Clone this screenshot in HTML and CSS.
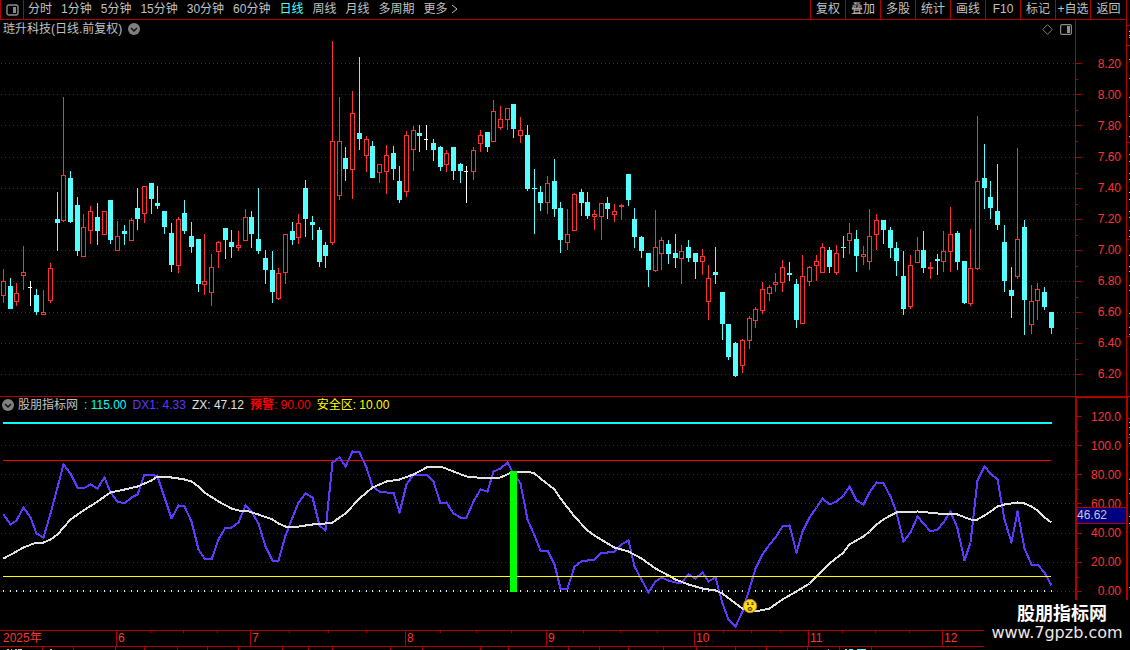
FILE: index.html
```html
<!DOCTYPE html>
<html lang="zh-CN">
<head>
<meta charset="utf-8">
<title>琏升科技 日线</title>
<link rel="stylesheet" href="styles.css">
</head>
<body>
<div class="app">
  <header class="toolbar">
    <button class="layout-toggle" aria-label="布局">
      <svg width="13" height="12" viewBox="0 0 13 12"><rect x="1" y="1" width="11" height="10" rx="2" fill="none" stroke="#8a8a8a" stroke-width="1.4"/><rect x="7" y="3" width="3" height="6" fill="#8a8a8a"/></svg>
    </button>
    <nav class="periods">
      <button>分时</button><button>1分钟</button><button>5分钟</button><button>15分钟</button><button>30分钟</button><button>60分钟</button><button class="active">日线</button><button>周线</button><button>月线</button><button>多周期</button><button class="more">更多<svg width="7" height="10" viewBox="0 0 7 10"><path d="M1 1l5 4-5 4" fill="none" stroke="#c0c0c0"/></svg></button>
    </nav>
    <div class="actions">
      <button>复权</button><button>叠加</button><button>多股</button><button>统计</button><button>画线</button><button>F10</button><button>标记</button><button>+自选</button><button>返回</button>
    </div>
  </header>

  <main class="board">
    <section class="panel price">
      <svg id="price" class="plot" viewBox="0 20 1075 376" preserveAspectRatio="none"></svg>
      <div class="caption">
        <h1>琏升科技(日线.前复权)</h1>
        <button class="round" aria-label="展开"><svg width="12" height="12" viewBox="0 0 12 12"><circle cx="6" cy="6" r="6" fill="#808080"/><path d="M3 5l3 3 3-3" fill="none" stroke="#111" stroke-width="1.5"/></svg></button>
        <div class="tools">
          <svg width="11" height="11" viewBox="0 0 11 11"><path d="M5.5 .7l4.8 4.8-4.8 4.8L.7 5.500z" fill="none" stroke="#808080"/></svg>
          <svg width="12" height="11" viewBox="0 0 12 11"><rect x=".6" y=".6" width="10.800" height="9.800" rx="1.500" fill="none" stroke="#8a8a8a" stroke-width="1.200"/><rect x="7" y="2" width="3" height="7" fill="#909090"/></svg>
        </div>
      </div>
    </section>
    <aside class="scale price-scale">
      <svg id="priceTicks" class="plot" viewBox="0 20 50 376" preserveAspectRatio="none"></svg>
      <div class="labels"><span>8.20</span><span>8.00</span><span>7.80</span><span>7.60</span><span>7.40</span><span>7.20</span><span>7.00</span><span>6.80</span><span>6.60</span><span>6.40</span><span>6.20</span></div>
    </aside>

    <section class="panel indicator">
      <svg id="indicator" class="plot" viewBox="0 397 1075 233" preserveAspectRatio="none"></svg>
      <div class="caption">
        <button class="round" aria-label="展开"><svg width="12" height="12" viewBox="0 0 12 12"><circle cx="6" cy="6" r="6" fill="#808080"/><path d="M3 5l3 3 3-3" fill="none" stroke="#111" stroke-width="1.5"/></svg></button>
        <h2>股朋指标网</h2>
        <span class="cyan">: 115.00</span><span class="violet">DX1: 4.33</span><span class="white">ZX: 47.12</span><span class="red"><b>预警</b>: 90.00</span><span class="yellow">安全区: 10.00</span>
      </div>
    </section>
    <aside class="scale indicator-scale">
      <svg id="indicatorTicks" class="plot" viewBox="0 398 49 232" preserveAspectRatio="none"></svg>
      <div class="labels"><span>120.0</span><span>100.0</span><span>80.00</span><span>60.00</span><span>40.00</span><span>20.00</span><span>0.00</span></div>
      <output class="cursor-value">46.62</output>
    </aside>

    <div class="edge"><svg id="edge" class="plot" viewBox="1127 20 3 610" preserveAspectRatio="none"></svg></div>
  </main>

  <footer class="timeline">
    <svg id="dateTicks" class="plot" viewBox="0 631 1130 19" preserveAspectRatio="none"></svg>
    <div class="months"><span>2025年</span><span>6</span><span>7</span><span>8</span><span>9</span><span>10</span><span>11</span><span>12</span></div>
  </footer>

  <div class="brand"><strong>股朋指标网</strong><span>www.7gpzb.com</span></div>
</div>
<script src="chart.js"></script>
</body>
</html>
```
FILE: styles.css
```css
* { box-sizing: border-box; }

body {
  margin: 0;
  background: #000;
  color: #c0c0c0;
  font: 12px/16px "Liberation Sans", "Noto Sans CJK SC", sans-serif;
}

button {
  margin: 0;
  padding: 0;
  border: 0;
  background: none;
  color: inherit;
  font: inherit;
  white-space: nowrap;
}

h1, h2 { margin: 0; font-size: 12px; font-weight: 400; }

svg { display: block; }

.app {
  position: relative;
  display: flex;
  flex-direction: column;
  height: 100vh;
  min-height: 400px;
  overflow: hidden;
}

.toolbar {
  display: flex;
  flex: none;
  height: 20px;
  margin-right: 3px;
  border: solid #b00000;
  border-width: 0 1px 1px 0;
}

.layout-toggle {
  display: flex;
  align-items: center;
  justify-content: center;
  width: 24px;
  border: solid #b00000;
  border-width: 0 1px;
}

.periods { display: flex; flex: 1; gap: 9px; padding-left: 4px; }
.periods button { height: 18px; }
.periods .active { color: #54ffff; }
.periods .more { display: flex; align-items: center; gap: 3px; }

.actions { display: grid; grid-template-columns: repeat(8, 35px) 36px; }
.actions button { height: 18px; border-left: 1px solid #b00000; }
.actions button { height: 19px; padding-bottom: 1px; }

.board {
  display: grid;
  flex: 1;
  grid-template-columns: 1fr 51px 4px;
  grid-template-rows: 376fr 234fr;
  min-height: 0;
}

.panel, .scale { display: grid; min-height: 0; min-width: 0; }
.panel > *, .scale > * { grid-area: 1 / 1; min-height: 0; min-width: 0; }

.plot { width: 100%; height: 100%; shape-rendering: crispEdges; }

.indicator { border-top: 1px solid #b00000; }

.caption { display: flex; align-items: center; align-self: start; z-index: 1; }
.price .caption { height: 18px; gap: 6px; padding: 0 3px; }
.indicator .caption { height: 16px; gap: 6px; padding-left: 2px; }
.indicator .caption h2 { margin-left: -2px; }
.tools { display: flex; gap: 7px; margin-left: auto; }

.cyan { color: #00ffff; }
.violet { color: #6038ff; }
.white { color: #e0e0e0; }
.red { color: #ff0000; }
.yellow { color: #ffff00; }

.scale { border-left: 1px solid #b00000; color: #ff3232; }
.labels { display: flex; flex-direction: column; padding-right: 5px; text-align: right; }
.labels span { display: flex; flex: 1; align-items: center; justify-content: flex-end; min-height: 0; }
.price-scale .labels { padding-top: 28px; padding-bottom: 6px; }
.indicator-scale { border-top: 2px solid #b00000; border-left-width: 2px; }
.indicator-scale .labels { padding-top: 4px; padding-bottom: 24px; }

.cursor-value {
  align-self: start;
  height: 17px;
  margin-top: 109px;
  border: solid #b00000;
  border-width: 1px 0;
  background: #000080;
  color: #c8c8c8;
  line-height: 14px;
}

.edge { grid-area: 1 / 3 / 3 / 4; border-left: 1px solid #b00000; }

.timeline { display: grid; flex: none; height: 20px; border-top: 1px solid #b00000; color: #ff3232; }
.timeline > * { grid-area: 1 / 1; min-height: 0; }
.months {
  display: grid;
  grid-template-columns: 116fr 134fr 155fr 141fr 148fr 114fr 134fr 184fr;
  align-self: start;
  height: 16px;
  margin-right: 4px;
  border-bottom: 1px solid #b00000;
}
.months span { padding-left: 1px; border-left: 1px solid #b00000; line-height: 15px; }
.months span:first-child { padding-left: 3px; border-left: 0; }

.brand {
  position: absolute;
  right: 0;
  bottom: 0;
  z-index: 2;
  display: flex;
  flex-direction: column;
  align-items: center;
  width: 146px;
  height: 50px;
  padding: 4px 0 0 10px;
  background: #000;
  color: #fff;
}
.brand strong { font-size: 18px; line-height: 20px; }
.brand span { margin-left: -10px; color: #f0e8e8; font: 16px/18px "DejaVu Sans", sans-serif; }
```
FILE: chart.js
```js
const NS = "http://www.w3.org/2000/svg";
const UP = "#ff3232", DOWN = "#54ffff", FLAT = "#ffffff", FRAME = "#b00000", GRID = "#b00000";

function add(svg, tag, attrs) {
  const el = document.createElementNS(NS, tag);
  for (const k in attrs) el.setAttribute(k, attrs[k]);
  svg.appendChild(el);
}
const box = (svg, x, y, width, height, fill) => add(svg, "rect", { x, y, width, height, fill });
const slot = i => Math.floor(3.37 + i * 6.7179);
const byId = id => document.getElementById(id);

// kind, high, low, body top, body bottom
const candles = `r 269 303 281 296|c 278 309 286 309|r 283 306 293 302|r 246 290 272 276|w 281 306 287 288|c 289 315 295 312|r 290 315 312 315|r 263 303 268 301|c 192 251 219 223|r 97 222 175 221
c 171 223 178 222|c 197 256 205 251|r 214 257 227 257|r 206 244 211 231|c 203 245 217 231|r 211 235 211 235|c 200 244 200 240|r 221 251 236 251|c 225 245 231 234|r 218 241 220 241
c 188 230 208 219|r 186 223 186 214|c 183 214 183 199|c 186 209 203 206|c 211 234 211 227|c 223 272 233 265|r 217 273 219 266|c 200 234 213 231|c 222 253 236 247|c 239 292 239 284
r 234 295 281 285|r 254 306 267 293|r 241 268 242 252|c 228 259 228 240|c 230 258 242 247|r 231 251 245 248|r 209 241 217 241|c 211 248 217 234|c 188 254 239 251|c 250 284 258 270
c 251 303 270 292|r 268 300 273 299|r 234 284 234 273|c 222 245 231 240|r 214 244 223 238|c 180 237 188 219|c 216 240 222 225|c 227 267 230 262|c 242 268 245 256|r 41 245 141 243
r 97 200 141 196|c 147 181 158 169|r 91 199 113 170|c 57 150 133 139|r 136 172 139 156|c 141 178 146 178|r 164 183 164 173|r 145 194 155 172|c 146 180 153 169|c 166 203 181 200
r 131 197 135 192|r 126 171 130 150|c 125 152 133 136|w 125 150 139 140|c 139 161 143 150|c 146 171 147 167|r 150 172 153 165|c 147 180 147 171|c 163 183 164 171|w 166 203 171 172
r 147 180 150 172|r 130 152 135 144|c 132 152 132 147|r 100 142 111 142|r 106 130 119 128|r 108 130 108 120|c 104 138 104 129|r 117 143 130 136|c 125 191 135 189|c 169 234 188 189
c 186 211 192 203|r 176 214 183 203|c 159 217 181 209|c 202 253 208 240|r 209 250 234 243|r 193 231 194 231|c 189 216 192 203|c 192 219 202 216|r 210 230 214 217|r 203 240 203 217
c 197 219 203 209|r 204 222 211 215|r 204 220 205 207|c 174 206 174 200|c 208 248 219 237|c 236 258 237 251|c 253 287 253 270|r 210 272 247 271|r 237 270 240 254|c 240 264 244 254
c 234 268 253 258|r 245 284 251 259|c 240 262 247 258|c 253 279 253 262|r 249 275 256 262|r 265 320 278 302|c 247 284 272 275|c 292 340 292 324|c 324 360 324 357|c 342 377 343 376
r 339 373 340 366|r 316 349 318 341|r 307 328 309 321|r 282 314 289 311|r 285 301 287 294|r 273 292 282 285|r 260 292 267 283|c 262 281 273 275|c 279 328 284 320|r 255 324 276 324
r 266 286 267 282|r 255 281 261 266|r 243 273 247 273|c 247 273 250 267|r 245 275 253 273|c 236 258 247 248|r 223 254 233 241|c 230 272 239 256|r 246 265 254 257|r 209 270 236 262
r 214 250 220 235|c 220 244 220 230|c 227 258 230 248|c 242 276 248 261|c 251 315 276 309|r 255 309 265 307|r 237 263 250 263|c 231 273 250 268|r 262 279 267 269|c 254 275 259 261
r 231 272 251 262|r 207 272 234 252|c 231 270 233 262|c 261 304 261 303|r 229 306 268 304|r 116 270 181 269|c 144 209 178 188|c 181 219 197 208|c 164 230 211 225|c 225 292 242 281
c 267 318 290 296|r 148 279 239 277|c 220 335 227 300|r 285 334 301 325|r 283 320 289 301|c 287 310 292 307|c 312 334 312 328`
  .split(/[|\n]/).map(s => s.trim().split(" "));

const dx = [514,524,520,507,517,533,537,513,487,464,473,487,488,484,488,477,492,501,503,497,
  494,474,474,476,497,518,505,506,521,549,558,559,539,527,527,522,505,511,523,546,
  560,560,535,517,502,493,497,525,530,462,457,466,451,452,467,486,491,492,492,512,
  484,474,474,474,481,503,502,513,517,517,501,489,491,471,468,462,473,483,519,535,
  550,550,564,588,588,566,561,560,559,552,552,551,544,540,566,579,592,581,577,580,
  582,582,574,578,572,581,577,603,619,626,611,588,568,554,544,537,526,525,552,531,
  517,507,498,504,501,495,486,500,504,492,482,483,496,512,541,532,516,523,531,529,
  522,511,528,560,542,480,466,473,479,519,542,511,548,564,564,572,585].map((y, i) => [i, y]);

const zx = [[0,558],[2,551],[3,547],[5,542],[6,542],[7,539],[8,534],[10,519],[12,510],[14,501],[16,492],[18,489],[20,486],[21,483],[22,480],[23,476],[24,476],[26,478],[27,479],[28,481],[29,486],[30,492],[32,501],[34,508],[35,510],[36,510],[38,514],[40,519],[41,523],[42,526],[43,527],[45,525],[46,524],[48,523],[49,522],[51,513],[53,498],[55,487],[57,481],[59,479],
  [61,474],[63,467],[64,466],[65,466],[67,471],[69,476],[72,478],[74,477],[76,471],[78,471],[79,473],[80,478],[82,489],[83,498],[85,516],[87,530],[88,535],[90,543],[91,547],[93,551],[95,558],[97,568],[99,575],[100,579],[102,584],[104,588],[106,590],[107,593],[109,603],[110,608],[111,610],[112,611],
  [114,608],[116,599],[118,591],[120,583],[122,570],[123,563],[125,552],[126,544],[128,536],[129,531],[130,524],[131,519],[132,515],[133,512],[136,511],[139,513],[142,514],[144,519],[145,519],[146,515],[147,511],[148,506],[149,504],[151,502],[152,503],[153,506],[154,510],[155,517],[156,522]];

const priceRows = [63, 94, 125, 157, 188, 219, 250, 281, 312, 343, 374];
const indicatorRows = [416, 445, 474, 503, 533, 562, 591];

function gridRow(svg, y) {
  add(svg, "line", { x1: 1, x2: 1075, y1: y + 0.5, y2: y + 0.5, stroke: GRID, "stroke-dasharray": "1 3" });
}
function curve(svg, pts, stroke) {
  const points = pts.map(([i, y]) => `${slot(i) + 0.5},${y + 0.5}`).join(" ");
  add(svg, "polyline", { points, stroke, fill: "none", "stroke-width": 2, "stroke-linejoin": "round" });
}

const price = byId("price");
priceRows.forEach(y => gridRow(price, y));
candles.forEach(([kind, ...v], i) => {
  const [high, low, top, bottom] = v.map(Number), x = slot(i);
  const color = { r: UP, c: DOWN, w: FLAT }[kind];
  box(price, x, high, 1, low - high, color);
  if (kind === "r") {
    box(price, x - 2, top, 5, bottom - top, UP);
    if (bottom - top > 2) box(price, x - 1, top + 1, 3, bottom - top - 2, "#000");
  } else {
    box(price, x - 2, top, kind === "c" ? 5 : 4, bottom - top, color);
  }
});

const ind = byId("indicator");
indicatorRows.slice(1).forEach(y => gridRow(ind, y));
for (let i = 0; i < 157; i++) box(ind, slot(i), 590, 1, 2, "#e8e8ff");
box(ind, 3, 422, 1049, 2, "#00ffff");
box(ind, 3, 460, 1048, 1, "#ff0000");
curve(ind, dx, "#6038ff");
curve(ind, zx, "#e0e0e0");
box(ind, 3, 576, 1048, 1, "#ffff00");
box(ind, 510, 471, 7, 121, "#00ff00");

// signal marker: worried face
const face = document.createElementNS(NS, "g");
face.setAttribute("shape-rendering", "geometricPrecision");
ind.appendChild(face);
add(face, "circle", { cx: 750, cy: 606, r: 6.7, fill: "#ffd91c", stroke: "#b88a10", "stroke-width": 1 });
add(face, "path", { d: "M746.5 602.5h2M751.500 602.500h2", stroke: "#77601a", "stroke-width": 1 });
add(face, "path", { d: "M747 604.300h2M751.500 604.300h2", stroke: "#302800", "stroke-width": 1.4 });
add(face, "ellipse", { cx: 750, cy: 609, rx: 2, ry: 1.6, fill: "#d09a18", stroke: "#504000", "stroke-width": 1 });

function ticks(svg, rows) {
  rows.forEach((y, i) => {
    box(svg, 0, y, 5, 1, FRAME);
    if (i < rows.length - 1) box(svg, 0, Math.ceil((y + rows[i + 1]) / 2), 2, 1, FRAME);
  });
}
ticks(byId("priceTicks"), priceRows);
ticks(byId("indicatorTicks"), indicatorRows);

const dates = byId("dateTicks");
[150,183,217,289,328,366,440,476,511,583,620,657,723,751,780,842,875,909].forEach(x => box(dates, x, 631, 1, 2, FRAME));
[42,73,115,144,177,207,238,282,308,332,390,422,480,508,568,599,628,663,696,735,766,807,839,871].forEach(x => box(dates, x, 647, 1, 3, FRAME));
[[7,2],[11,1],[15,2],[18,4],[50,2],[828,1]].forEach(([x, w]) => box(dates, x, 649, w, 1, "#c0c0c0"));
[[845,2],[849,4],[857,9]].forEach(([x, w]) => box(dates, x, 649, w, 1, DOWN));

const edge = byId("edge");
[25,45,142,239,336,396,418,437].forEach(y => box(edge, 1127, y, 3, 1, FRAME));
box(edge, 1127, 396, 1, 234, FRAME);
[31,35,37,59,78,97,116,136,154,161,173,179,192,199,211,217,230,236,255,266,271,285,290,313,327,334,422,427,434,443,479,493,516,523,587]
  .forEach(y => box(edge, 1129, y, 1, 1, "#c0c0c0"));
```
